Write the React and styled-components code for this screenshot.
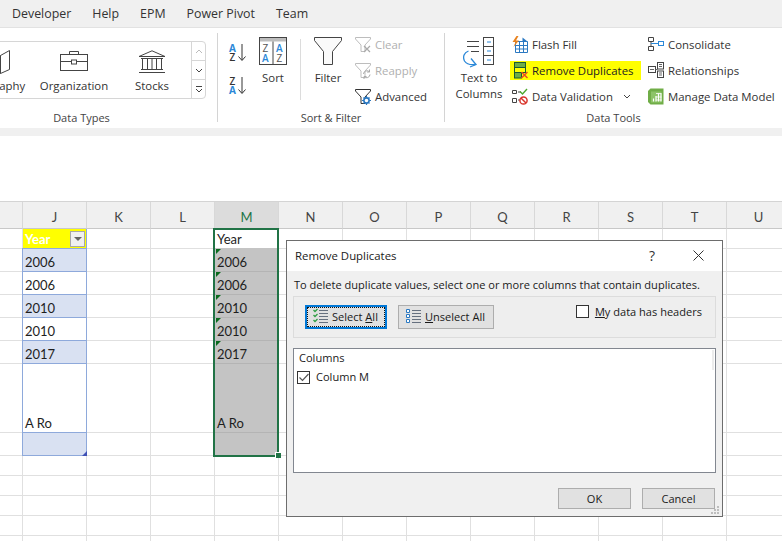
import React from 'react';
import styled, { createGlobalStyle } from 'styled-components';

const GlobalStyle = createGlobalStyle`
  html, body {
    margin: 0;
    padding: 0;
    background: #fff;
  }
  body {
    font-family: "Open Sans", "Noto Sans", "Liberation Sans", sans-serif;
    font-size: 11.4px;
    color: #262626;
  }
`;

const Page = styled.div`
  position: relative;
  width: 782px;
  height: 541px;
  overflow: hidden;
  background: #fff;
`;

const TabBar = styled.nav`
  display: flex;
  align-items: center;
  gap: 21px;
  height: 27px;
  padding-left: 12px;
  background: #f0f0f0;
  border-bottom: 1px solid #e2e2e2;
  font-size: 12.4px;
  color: #333;
`;

const Ribbon = styled.section`
  display: flex;
  height: 100px;
  background: #fff;
`;

const Group = styled.div`
  display: flex;
  flex-direction: column;
  flex: none;
  width: ${p => p.$width}px;
  margin-left: ${p => p.$shift || 0}px;
`;

const GroupBody = styled.div`
  display: flex;
  flex: 1;
  min-height: 0;
  padding-left: ${p => p.$pad || 0}px;
`;

const GroupLabel = styled.div`
  height: 16px;
  margin-bottom: 2px;
  line-height: 16px;
  text-align: center;
  font-size: 11px;
  color: #444;
`;

const GroupRule = styled.div`
  flex: none;
  width: 1px;
  height: 89px;
  margin-top: 5px;
  background: #d4d4d4;
`;

const InnerRule = styled.div`
  flex: none;
  width: 1px;
  height: 61px;
  margin: 11px 5px 0;
  background: #dcdcdc;
`;

const Gallery = styled.div`
  display: flex;
  width: 260px;
  height: 58px;
  margin-top: 13px;
  padding-left: 10px;
  box-sizing: border-box;
  border: 1px solid #d6d6d6;
  border-radius: 4px;
`;

const GalleryItem = styled.div`
  display: flex;
  flex-direction: column;
  align-items: center;
  flex: none;
  width: 78px;
  padding-top: 8px;
  color: #333;
  white-space: nowrap;
  line-height: 16px;
  svg { margin-bottom: 4px; }
`;

const GalleryScroll = styled.div`
  display: flex;
  flex-direction: column;
  flex: none;
  width: 14px;
  margin-left: auto;
  border-left: 1px solid #d6d6d6;
`;

const ScrollCell = styled.div`
  display: flex;
  align-items: center;
  justify-content: center;
  flex: 1;
  border-top: ${p => (p.$first ? 'none' : '1px solid #d6d6d6')};
`;

const SortStack = styled.div`
  display: flex;
  flex-direction: column;
  gap: 14px;
  flex: none;
  width: 18px;
  padding-top: 15px;
  margin-right: 4px;
  svg { display: block; overflow: visible; }
`;

const BigButton = styled.div`
  display: flex;
  flex-direction: column;
  align-items: center;
  flex: none;
  width: ${p => p.$width || 44}px;
  padding-top: ${p => p.$top ?? 9}px;
  text-align: center;
  line-height: 16px;
  color: #333;
`;

const BigLabel = styled.div`
  margin-top: ${p => p.$gap ?? 5}px;
`;

const SmallStack = styled.div`
  display: flex;
  flex-direction: column;
  flex: none;
  width: ${p => p.$width}px;
  margin-left: ${p => p.$gap || 0}px;
  padding-top: 3px;
`;

const SmallButton = styled.div`
  display: flex;
  align-items: center;
  gap: 4px;
  height: 26.5px;
  padding-left: ${p => p.$pad || 0}px;
  white-space: nowrap;
  color: ${p => (p.$disabled ? '#b0b0b0' : '#333')};
`;

const Marked = styled(SmallButton)`
  height: 19px;
  margin: 4px 0 3.5px;
  background: #ffff00;
  color: #222;
`;

const Caret = styled.svg`
  margin-left: auto;
  margin-right: 10px;
`;

const Band = styled.div`
  height: 8px;
  background: #f0f0f0;
`;

const FormulaGap = styled.div`
  height: 65px;
  background: #fff;
  border-bottom: 1px solid #d4d4d4;
`;

const Sheet = styled.div`
  display: grid;
  grid-template-columns: 23px repeat(12, 64px);
  grid-template-rows: 27px 20px repeat(5, 23px) 69px 23px repeat(5, 20px);
  font-family: Lato, "Liberation Sans", sans-serif;
  font-size: 13px;
  color: #1e1e1e;
`;

const ColHead = styled.div`
  display: flex;
  align-items: center;
  justify-content: center;
  box-sizing: border-box;
  padding-top: 4px;
  background: ${p => (p.$active ? '#dcdcdc' : '#f0f0f0')};
  border-right: 1px solid #d8d8d8;
  border-bottom: 1px solid #c8c8c8;
  color: ${p => (p.$active ? '#217346' : '#444')};
`;

const Cell = styled.div`
  position: relative;
  grid-column: ${p => p.$c};
  grid-row: ${p => p.$r};
  display: flex;
  align-items: flex-end;
  box-sizing: border-box;
  padding: 0 0 1px 2px;
  background: ${p => p.$fill || '#fff'};
  border-right: 1px solid ${p => p.$right || '#e0e0e0'};
  border-bottom: 1px solid ${p => p.$line || '#e0e0e0'};
  font-weight: ${p => (p.$bold ? 700 : 400)};
  color: ${p => (p.$bold ? '#fff' : 'inherit')};
  ${p => p.$flag && `
    &::before {
      content: '';
      position: absolute;
      top: 0;
      left: 1px;
      border-top: 5px solid #0b6a1e;
      border-right: 5px solid transparent;
    }
  `}
`;

const FilterButton = styled.div`
  position: absolute;
  right: 1px;
  top: 2px;
  display: flex;
  align-items: center;
  justify-content: center;
  width: 15px;
  height: 16px;
  box-sizing: border-box;
  background: #f0f0f0;
  border: 1px solid #a8a8a8;
  &::after {
    content: '';
    border-top: 4px solid #666;
    border-left: 4px solid transparent;
    border-right: 4px solid transparent;
  }
`;

const TableFrame = styled.div`
  position: relative;
  grid-column: 2;
  grid-row: 3 / 10;
  margin: -1px 0 0 -1px;
  border: 1px solid #8ea9db;
  pointer-events: none;
`;

const TableGrip = styled.div`
  position: absolute;
  right: -1px;
  bottom: -1px;
  width: 0;
  height: 0;
  border-bottom: 5px solid #3f51b5;
  border-left: 5px solid transparent;
`;

const Selection = styled.div`
  position: relative;
  grid-column: 5;
  grid-row: 2 / 10;
  margin: -1px 0 -1px -2px;
  border: 2px solid #217346;
  pointer-events: none;
`;

const SelectionGrip = styled.div`
  position: absolute;
  right: -4px;
  bottom: -3px;
  width: 5px;
  height: 5px;
  background: #217346;
  border-left: 1px solid #fff;
  border-top: 1px solid #fff;
`;

const Dialog = styled.div`
  position: absolute;
  left: 286px;
  top: 240px;
  display: flex;
  flex-direction: column;
  width: 437px;
  height: 277px;
  box-sizing: border-box;
  background: #f0f0f0;
  border: 1px solid #6d6d6d;
  font-size: 11.05px;
  color: #1a1a1a;
`;

const DialogTitle = styled.header`
  display: flex;
  align-items: center;
  flex: none;
  height: 29px;
  padding: 0 18px 1px 8px;
  background: #fff;
  font-size: 11.4px;
`;

const HelpMark = styled.span`
  margin-left: auto;
  margin-right: 38px;
  font-size: 14px;
  color: #333;
`;

const DialogBody = styled.div`
  display: flex;
  flex-direction: column;
  flex: 1;
  padding: 0 6px;
`;

const Instruction = styled.div`
  height: 25px;
  padding-left: 1px;
  line-height: 27px;
  white-space: nowrap;
`;

const OptionPanel = styled.div`
  display: flex;
  align-items: flex-start;
  gap: 11px;
  height: 42px;
  box-sizing: border-box;
  padding: 8px 13px 0 11px;
  background: #eeeeee;
  border: 1px solid #dcdcdc;
`;

const PanelButton = styled.div`
  display: flex;
  align-items: center;
  gap: 3px;
  flex: none;
  width: ${p => p.$width}px;
  height: 24px;
  box-sizing: border-box;
  padding: 0 0 2px 7px;
  background: #e1e1e1;
  border: ${p => (p.$focus ? '2px solid #0078d7' : '1px solid #adadad')};
  ${p => p.$focus && `
    padding-left: 6px;
    outline: 1px dotted #111;
    outline-offset: -3px;
  `}
`;

const HeaderCheck = styled.label`
  display: flex;
  align-items: flex-start;
  gap: 6px;
  margin-left: auto;
  line-height: 13px;
`;

const Box = styled.span`
  display: flex;
  align-items: center;
  justify-content: center;
  flex: none;
  width: ${p => p.$size}px;
  height: ${p => p.$size}px;
  box-sizing: border-box;
  background: #fff;
  border: 1px solid #333;
`;

const ColumnList = styled.div`
  position: relative;
  height: 125px;
  margin-top: 10px;
  box-sizing: border-box;
  padding: 1px 3px;
  background: #fff;
  border: 1px solid #828790;
  line-height: 16px;
`;

const ListHead = styled.div`
  padding-left: 2px;
`;

const ListRow = styled.div`
  display: flex;
  align-items: center;
  gap: 6px;
  margin-top: 3px;
`;

const ListThumb = styled.div`
  position: absolute;
  top: 1px;
  right: 1px;
  width: 2px;
  height: 20px;
  background: #ececec;
`;

const DialogFooter = styled.footer`
  display: flex;
  justify-content: flex-end;
  gap: 11px;
  margin-top: 15px;
  padding-right: 1px;
`;

const FooterButton = styled.div`
  display: flex;
  align-items: center;
  justify-content: center;
  width: 73px;
  height: 21px;
  box-sizing: border-box;
  padding-bottom: 1px;
  background: #e1e1e1;
  border: 1px solid #adadad;
`;

const Grip = styled.svg`
  position: absolute;
  right: 2px;
  bottom: 1px;
`;

const SortUp = () => (
  <svg width="18" height="19" viewBox="0 0 18 19">
    <text x="0" y="8.5" fontFamily="Open Sans" fontWeight="700" fontSize="10" fill="#2b88d8">A</text>
    <text x="0.5" y="18" fontFamily="Open Sans" fontWeight="600" fontSize="10" fill="#333">Z</text>
    <path d="M13 1v16M9.5 13.5L13 17.5l3.5-4" fill="none" stroke="#333" />
  </svg>
);

const SortDown = () => (
  <svg width="18" height="19" viewBox="0 0 18 19">
    <text x="0.5" y="8.5" fontFamily="Open Sans" fontWeight="600" fontSize="10" fill="#333">Z</text>
    <text x="0" y="18" fontFamily="Open Sans" fontWeight="700" fontSize="10" fill="#2b88d8">A</text>
    <path d="M13 1v16M9.5 13.5L13 17.5l3.5-4" fill="none" stroke="#333" />
  </svg>
);

const SortIcon = () => (
  <svg width="28" height="28" viewBox="0 0 28 28">
    <rect x="0.5" y="0.5" width="27" height="27" fill="#fff" stroke="#444" />
    <rect x="1" y="1" width="26" height="3.5" fill="#bdbdbd" />
    <path d="M14 4.5v23" stroke="#444" />
    <text x="3.5" y="15" fontFamily="Open Sans" fontSize="10" fill="#555">Z</text>
    <text x="3" y="25" fontFamily="Open Sans" fontSize="10" fontWeight="600" fill="#2b88d8">A</text>
    <text x="17" y="15" fontFamily="Open Sans" fontSize="10" fontWeight="600" fill="#2b88d8">A</text>
    <text x="17.5" y="25" fontFamily="Open Sans" fontSize="10" fill="#555">Z</text>
  </svg>
);

const FilterIcon = () => (
  <svg width="28" height="28" viewBox="0 0 28 28">
    <path d="M0.5 0.5H27.5V3.5L18.5 14.5V27.5H9.5V14.5L0.5 3.5Z" fill="#fafafa" stroke="#444" />
  </svg>
);

const SmallFunnel = ({ stroke }) => (
  <path d="M0.5 1.5H15.5V3L10 9V15.5H6V9L0.5 3Z" fill="#fff" stroke={stroke} />
);

const ClearIcon = () => (
  <svg width="16" height="17" viewBox="0 0 16 17">
    <SmallFunnel stroke="#bdbdbd" />
    <path d="M9 10l6 6M15 10l-6 6" stroke="#a9a9a9" strokeWidth="1.2" />
  </svg>
);

const ReapplyIcon = () => (
  <svg width="16" height="17" viewBox="0 0 16 17">
    <SmallFunnel stroke="#bdbdbd" />
    <path d="M8.5 12a3.5 3.5 0 0 1 6-2.2M15 12.5a3.5 3.5 0 0 1-6 2.2" fill="none" stroke="#a9a9a9" />
    <path d="M14.5 7.5v2.5h-2.5M9 17v-2.5h2.5" fill="none" stroke="#a9a9a9" />
  </svg>
);

const AdvancedIcon = () => (
  <svg width="16" height="17" viewBox="0 0 16 17">
    <SmallFunnel stroke="#333" />
    <circle cx="11.5" cy="12.5" r="2.6" fill="#fff" stroke="#2b79c2" strokeWidth="1.6" />
    <path d="M11.5 8v2M11.5 15v2M7 12.5h2M14 12.5h2M8.5 9.5l1.4 1.4M13.1 14.1l1.4 1.4M14.5 9.5l-1.4 1.4M9.9 14.1l-1.4 1.4" stroke="#2b79c2" strokeWidth="1.2" />
  </svg>
);

const TextColumnsIcon = () => (
  <svg width="32" height="32" viewBox="0 0 32 32">
    <path d="M4 5.5h12M4 10.5h12M8 15.5h8" stroke="#444" />
    <rect x="20.5" y="1.5" width="10" height="27" fill="#fff" stroke="#444" />
    <path d="M20.5 10.5h10M20.5 19.5h10" stroke="#444" />
    <path d="M24 6h4M24 15h4M24 24h4" stroke="#2b88d8" />
    <path d="M5.5 15C1 16.5-0.5 21 1.5 25c2 3 6 4 10.5 3.5" fill="none" stroke="#2b88d8" strokeWidth="1.3" />
    <path d="M8 22.5l5 6-6 2.5" fill="none" stroke="#2b88d8" strokeWidth="1.3" />
  </svg>
);

const FlashFillIcon = () => (
  <svg width="16" height="17" viewBox="0 0 16 17">
    <path d="M3.5 5.5h12v11h-12zM3.5 9.5h12M3.5 13h12M7.5 5.5v11M11.5 5.5v11" fill="#fff" stroke="#2b79c2" />
    <path d="M10.5 1.5l5 4h-5z" fill="#2b79c2" />
    <path d="M4.5 0L0.5 6h3L1.5 11 7 4.5H4L6.5 0z" fill="#e8821e" />
  </svg>
);

const RemoveDupIcon = () => (
  <svg width="16" height="17" viewBox="0 0 16 17">
    <rect x="2.5" y="0.5" width="11" height="5" fill="#70ad47" stroke="#1d5c2e" />
    <rect x="2.5" y="5.5" width="11" height="5" fill="#ffff00" stroke="#1d5c2e" />
    <rect x="2.5" y="10.5" width="7" height="5.5" fill="#70ad47" stroke="#1d5c2e" />
    <path d="M9.5 10l6 6M15.5 10l-6 6" stroke="#ea4b24" strokeWidth="1.5" />
  </svg>
);

const ValidationIcon = () => (
  <svg width="16" height="17" viewBox="0 0 16 17">
    <path d="M0.5 2.5h4v3h-4zM0.5 10.5h4v4h-4zM6 4h3M6 12h2" fill="#fff" stroke="#444" />
    <path d="M8 3.5l2.5 2.5L15 1" fill="none" stroke="#4ea72e" strokeWidth="1.4" />
    <circle cx="11.5" cy="12.5" r="3.6" fill="#fff" stroke="#d9342b" strokeWidth="1.5" />
    <path d="M9 10l5 5" stroke="#d9342b" strokeWidth="1.5" />
  </svg>
);

const ConsolidateIcon = () => (
  <svg width="16" height="16" viewBox="0 0 16 16">
    <path d="M0.5 1.5h5v4h-5zM0.5 10.5h5v4h-5z" fill="#fff" stroke="#444" />
    <path d="M3 5.5v5" stroke="#444" />
    <rect x="10.5" y="5.5" width="5" height="4" fill="#fff" stroke="#2b88d8" />
    <path d="M3 7.5h7" stroke="#2b88d8" />
  </svg>
);

const RelationshipsIcon = () => (
  <svg width="16" height="16" viewBox="0 0 16 16">
    <rect x="0.5" y="4.5" width="7" height="6" fill="#fff" stroke="#444" />
    <path d="M2 7.5h4" stroke="#666" />
    <rect x="9.5" y="0.5" width="6" height="6.5" fill="#fff" stroke="#444" />
    <path d="M11 2.5h3M11 4.5h3" stroke="#666" />
    <rect x="9.5" y="9" width="6" height="6.5" fill="#fff" stroke="#444" />
    <path d="M11 11h3M11 13h3M7.5 7.5h2" stroke="#666" />
  </svg>
);

const DataModelIcon = () => (
  <svg width="16" height="17" viewBox="0 0 16 17">
    <path d="M0 3l2.5-2.5H15.5V16.5H2.5L0 14z" fill="#70ad47" />
    <path d="M3 3.5h10.5v11H3z" fill="#8dc468" />
    <path d="M5.5 10.5v3M8 8v5.5M10.5 5.5v8M13 5.5v8" stroke="#fff" strokeWidth="1.2" />
    <path d="M8 5.5h5.5M8 9h5.5M8 12h5.5" stroke="#fff" strokeWidth="0.8" />
  </svg>
);

const GeographyIcon = () => (
  <svg width="28" height="24" viewBox="0 0 28 24">
    <path d="M0.5 5.5L9.5 1 18.5 5.5 27.5 0.5V19.5L18.5 23.5 9.5 19.5 0.5 23.5Z" fill="#fff" stroke="#444" />
    <path d="M18.5 5.5V23.5M9.5 1V19.5" stroke="#444" />
  </svg>
);

const BriefcaseIcon = () => (
  <svg width="28" height="24" viewBox="0 0 28 24">
    <rect x="0.5" y="4.5" width="27" height="16" fill="#fff" stroke="#444" />
    <path d="M9.5 4.5v-3h9v3M0.5 11.5h11M16.5 11.5h11" fill="none" stroke="#444" />
    <rect x="11.5" y="10" width="5" height="4" fill="#fff" stroke="#444" />
  </svg>
);

const BankIcon = () => (
  <svg width="28" height="24" viewBox="0 0 28 24">
    <path d="M1 6.5L14 0.8 27 6.5Z" fill="#fff" stroke="#444" />
    <path d="M3 8.5h22M3 19.5h22M1 22.5h26" stroke="#444" strokeWidth="1.2" />
    <path d="M4.5 8.5v11M9.5 8.5v11M14 8.5v11M18.5 8.5v11M23.5 8.5v11" stroke="#444" />
  </svg>
);

const ChevronUp = ({ color = '#bbb' }) => (
  <svg width="8" height="5" viewBox="0 0 8 5">
    <path d="M1 4l3-3 3 3" fill="none" stroke={color} />
  </svg>
);

const ChevronDown = () => (
  <svg width="8" height="5" viewBox="0 0 8 5">
    <path d="M1 1l3 3 3-3" fill="none" stroke="#444" />
  </svg>
);

const ChevronMore = () => (
  <svg width="8" height="7" viewBox="0 0 8 7">
    <path d="M1 0.5h6M1 3l3 3 3-3" fill="none" stroke="#444" />
  </svg>
);

const SelectAllIcon = () => (
  <svg width="16" height="16" viewBox="0 0 16 16">
    <path d="M6 2.5h9M6 5.5h9M6 8.5h9M6 11.5h9M6 14.5h9" stroke="#66707f" />
    <path d="M0.5 2l1.5 1.5L4.5 1M0.5 7l1.5 1.5L4.5 6M0.5 12l1.5 1.5L4.5 11" fill="none" stroke="#2f9e44" strokeWidth="1.3" />
  </svg>
);

const UnselectAllIcon = () => (
  <svg width="16" height="16" viewBox="0 0 16 16">
    <path d="M6 2.5h9M6 5.5h9M6 8.5h9M6 11.5h9M6 14.5h9" stroke="#66707f" />
    <path d="M0.5 1.5h3v3h-3zM0.5 6.5h3v3h-3zM0.5 11.5h3v3h-3z" fill="#fff" stroke="#2b79c2" />
  </svg>
);

const CheckMark = () => (
  <svg width="10" height="9" viewBox="0 0 10 9">
    <path d="M0.5 4.5L3.5 7.5 9.5 1" fill="none" stroke="#555" strokeWidth="1.2" />
  </svg>
);

const CloseIcon = () => (
  <svg width="11" height="11" viewBox="0 0 11 11">
    <path d="M0.5 0.5l10 10M10.5 0.5l-10 10" stroke="#333" />
  </svg>
);

const columns = ['J', 'K', 'L', 'M', 'N', 'O', 'P', 'Q', 'R', 'S', 'T', 'U'];
const rowCount = 13;

const tableRows = {
  0: { text: 'Year', fill: '#ffff00', bold: true },
  1: { text: '2006', fill: '#d9e1f2' },
  2: { text: '2006' },
  3: { text: '2010', fill: '#d9e1f2' },
  4: { text: '2010' },
  5: { text: '2017', fill: '#d9e1f2' },
  6: { text: 'A Ro' },
  7: { fill: '#d9e1f2' },
};

const copiedRows = {
  0: { text: 'Year' },
  1: { text: '2006', flag: true },
  2: { text: '2006', flag: true },
  3: { text: '2010', flag: true },
  4: { text: '2010', flag: true },
  5: { text: '2017', flag: true },
  6: { text: 'A Ro' },
  7: {},
};

function SheetCell({ col, row, c, r }) {
  if (col === 'J' && tableRows[row]) {
    const d = tableRows[row];
    return (
      <Cell $c={c} $r={r} $fill={d.fill} $bold={d.bold} $line={row === 0 ? '#e0e0e0' : '#8ea9db'} $right="#8ea9db">
        {d.text}
        {row === 0 && <FilterButton />}
      </Cell>
    );
  }
  if (col === 'M' && copiedRows[row]) {
    const d = copiedRows[row];
    const grey = row > 0;
    return (
      <Cell $c={c} $r={r} $fill={grey ? '#c4c4c4' : '#fff'} $line={grey ? '#b4b4b4' : '#c4c4c4'} $right="#c4c4c4" $flag={d.flag}>
        {d.text}
      </Cell>
    );
  }
  return <Cell $c={c} $r={r} />;
}

export default function App() {
  return (
    <Page>
      <GlobalStyle />
      <TabBar>
        <span>Developer</span>
        <span>Help</span>
        <span>EPM</span>
        <span>Power Pivot</span>
        <span>Team</span>
      </TabBar>

      <Ribbon>
        <Group $width={271} $shift={-54}>
          <GroupBody>
            <Gallery>
              <GalleryItem><GeographyIcon />Geography</GalleryItem>
              <GalleryItem><BriefcaseIcon />Organization</GalleryItem>
              <GalleryItem><BankIcon />Stocks</GalleryItem>
              <GalleryScroll>
                <ScrollCell $first><ChevronUp /></ScrollCell>
                <ScrollCell><ChevronDown /></ScrollCell>
                <ScrollCell><ChevronMore /></ScrollCell>
              </GalleryScroll>
            </Gallery>
          </GroupBody>
          <GroupLabel>Data Types</GroupLabel>
        </Group>
        <GroupRule />

        <Group $width={226}>
          <GroupBody $pad={11}>
            <SortStack>
              <SortUp />
              <SortDown />
            </SortStack>
            <BigButton><SortIcon /><BigLabel>Sort</BigLabel></BigButton>
            <InnerRule />
            <BigButton><FilterIcon /><BigLabel>Filter</BigLabel></BigButton>
            <SmallStack $width={85} $gap={5}>
              <SmallButton $disabled><ClearIcon />Clear</SmallButton>
              <SmallButton $disabled><ReapplyIcon />Reapply</SmallButton>
              <SmallButton><AdvancedIcon />Advanced</SmallButton>
            </SmallStack>
          </GroupBody>
          <GroupLabel>Sort &amp; Filter</GroupLabel>
        </Group>
        <GroupRule />

        <Group $width={337}>
          <GroupBody $pad={8}>
            <BigButton $width={52} $top={8}>
              <TextColumnsIcon />
              <BigLabel $gap={2}>Text to<br />Columns</BigLabel>
            </BigButton>
            <SmallStack $width={131} $gap={5}>
              <SmallButton $pad={2}><FlashFillIcon />Flash Fill</SmallButton>
              <Marked $pad={2}><RemoveDupIcon />Remove Duplicates</Marked>
              <SmallButton $pad={2}>
                <ValidationIcon />Data Validation
                <Caret width="8" height="5" viewBox="0 0 8 5">
                  <path d="M1 1l3 3 3-3" fill="none" stroke="#444" />
                </Caret>
              </SmallButton>
            </SmallStack>
            <SmallStack $width={135} $gap={7}>
              <SmallButton><ConsolidateIcon />Consolidate</SmallButton>
              <SmallButton><RelationshipsIcon />Relationships</SmallButton>
              <SmallButton><DataModelIcon />Manage Data Model</SmallButton>
            </SmallStack>
          </GroupBody>
          <GroupLabel>Data Tools</GroupLabel>
        </Group>
      </Ribbon>

      <Band />
      <FormulaGap />

      <Sheet>
        <ColHead />
        {columns.map(c => <ColHead key={c} $active={c === 'M'}>{c}</ColHead>)}
        {Array.from({ length: rowCount }).map((_, row) => (
          <React.Fragment key={row}>
            <Cell $c={1} $r={row + 2} />
            {columns.map((col, i) => <SheetCell key={col} col={col} row={row} c={i + 2} r={row + 2} />)}
          </React.Fragment>
        ))}
        <TableFrame><TableGrip /></TableFrame>
        <Selection><SelectionGrip /></Selection>
      </Sheet>

      <Dialog>
        <DialogTitle>
          Remove Duplicates
          <HelpMark>?</HelpMark>
          <CloseIcon />
        </DialogTitle>
        <DialogBody>
          <Instruction>To delete duplicate values, select one or more columns that contain duplicates.</Instruction>
          <OptionPanel>
            <PanelButton $width={82} $focus>
              <SelectAllIcon />
              <span>Select <u>A</u>ll</span>
            </PanelButton>
            <PanelButton $width={96}>
              <UnselectAllIcon />
              <span><u>U</u>nselect All</span>
            </PanelButton>
            <HeaderCheck>
              <Box $size={13} />
              <span><u>M</u>y data has headers</span>
            </HeaderCheck>
          </OptionPanel>
          <ColumnList>
            <ListThumb />
            <ListHead>Columns</ListHead>
            <ListRow>
              <Box $size={13}><CheckMark /></Box>
              Column M
            </ListRow>
          </ColumnList>
          <DialogFooter>
            <FooterButton>OK</FooterButton>
            <FooterButton>Cancel</FooterButton>
          </DialogFooter>
        </DialogBody>
        <Grip width="9" height="9" viewBox="0 0 9 9">
          <path d="M6 0h2v2H6zM3 3h2v2H3zM6 3h2v2H6zM0 6h2v2H0zM3 6h2v2H3zM6 6h2v2H6z" fill="#bdbdbd" />
        </Grip>
      </Dialog>
    </Page>
  );
}
